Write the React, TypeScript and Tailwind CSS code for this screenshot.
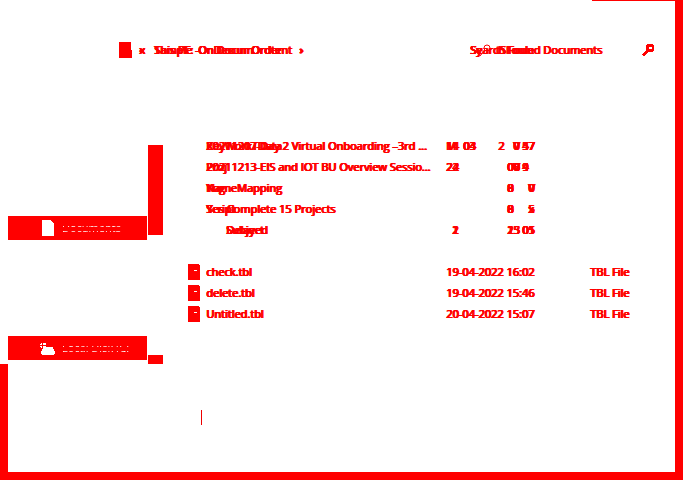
import React from "react";

type Piece = { place: string; texts: string[] };
type FileRow = { names: string[]; indent?: boolean; icon?: boolean; date?: string; pieces?: Piece[]; type?: string };

const rows: FileRow[] = [
  {
    names: ["20211207-Day 2 Virtual Onboarding –3rd ...", "KeyWorkTData"],
    pieces: [
      { place: "col-start-1", texts: ["14", "M"] },
      { place: "col-start-3", texts: ["04", "03"] },
      { place: "col-start-4", texts: ["2"] },
      { place: "col-start-6", texts: ["0", "V"] },
      { place: "col-start-7", texts: ["57", "47"] },
    ],
  },
  {
    names: ["20211213-EIS and IOT BU Overview Sessio...", "Proj"],
    pieces: [
      { place: "col-start-1", texts: ["24", "22"] },
      { place: "col-start-5", texts: ["00", "06"] },
      { place: "col-start-6", texts: ["V"] },
      { place: "col-start-7", texts: ["4", "9"] },
    ],
  },
  {
    names: ["NameMapping", "Yog"],
    pieces: [
      { place: "col-start-5", texts: ["0", "8"] },
      { place: "col-start-8", texts: ["0", "V"] },
    ],
  },
  {
    names: ["Yes Complete 15 Projects", "Script"],
    pieces: [
      { place: "col-start-5", texts: ["0", "8"] },
      { place: "col-start-8", texts: ["5", "x"] },
    ],
  },
  {
    names: ["Subject", "Delayed"],
    indent: true,
    pieces: [
      { place: "col-start-2", texts: ["2", "1"] },
      { place: "col-start-5", texts: ["25", "13"] },
      { place: "col-start-7", texts: ["05", "01"] },
    ],
  },
  { names: [] },
  { names: ["check.tbl"], icon: true, date: "19-04-2022 16:02", type: "TBL File" },
  { names: ["delete.tbl"], icon: true, date: "19-04-2022 15:46", type: "TBL File" },
  { names: ["Untitled.tbl"], icon: true, date: "20-04-2022 15:07", type: "TBL File" },
];

function Stack({ texts, className = "" }: { texts: string[]; className?: string }) {
  return (
    <span className={`grid whitespace-nowrap ${className}`}>
      {texts.map((text) => (
        <span key={text} className="col-start-1 row-start-1">{text}</span>
      ))}
    </span>
  );
}

function FileIcon() {
  return (
    <svg width="12" height="16" viewBox="0 0 12 16" shapeRendering="crispEdges" aria-hidden="true">
      <path d="M0 0H11V1H12V16H0Z" fill="#f00" />
      <path d="M6 6H9V7H6Z" fill="#fff" />
    </svg>
  );
}

function DocumentIcon() {
  return (
    <svg className="shrink-0" width="16" height="16" viewBox="0 0 16 16" shapeRendering="crispEdges" aria-hidden="true">
      <path d="M2 0H11V1H12V2H13V3H14V16H2Z" fill="#fff" />
    </svg>
  );
}

function DriveIcon() {
  return (
    <svg className="shrink-0" width="16" height="16" viewBox="0 0 16 16" shapeRendering="crispEdges" aria-hidden="true">
      <path
        d="M1 3H2V5H0V4H1ZM3 3H6V5H3ZM0 6H2V8H1V7H0ZM3 6H6V7H13V9H14V11H15V14H14V15H2V14H1V11H2V9H3Z"
        fill="#fff"
      />
    </svg>
  );
}

function NavItem({ icon, label }: { icon: React.ReactNode; label: string }) {
  return (
    <button type="button" className="flex h-6 w-full items-center gap-1.5 bg-[#ff0000] pl-8 text-left">
      {icon}
      <span className="bg-[linear-gradient(#f00_3px,#fff_3px,#fff_4px,#f00_4px,#f00_6px,#fff_6px,#fff_7px,#f00_7px,#f00_11px,#fff_11px,#fff_12px,#f00_12px)] bg-clip-text text-[11px] leading-4 font-normal text-transparent">
        {label}
      </span>
    </button>
  );
}

export default function App() {
  return (
    <div className="flex min-h-screen flex-col bg-white font-['Open_Sans','Noto_Sans',sans-serif] text-[11px] leading-4 text-[#ff0000]">
      <div className="flex flex-1">
        <div className="flex min-w-0 flex-1 flex-col">
          <header className="flex h-[135px] flex-col items-end">
            <div className="h-px w-[83px] bg-[#ff0000]" />
            <div className="mt-10 flex h-[18px] w-full items-center pr-5 pl-[119px] [text-shadow:1px_0_0_#f00,1px_0_0_#f00,0_0_0_#f00,0_0_0_#f00]">
              <svg className="shrink-0" width="13" height="16" viewBox="0 0 13 16" shapeRendering="crispEdges" aria-hidden="true">
                <path d="M0 0H12V8H13V16H0Z" fill="#f00" />
              </svg>
              <nav aria-label="Address" className="flex flex-1 items-center pl-[7px]">
                <Stack texts={["«", "x"]} className="w-[15px]" />
                <Stack texts={["Sample -", "This PF:"]} className="w-11" />
                <Stack texts={["On Docum", "OnDecun"]} className="w-[53px]" />
                <Stack texts={["Ordtent", "Order"]} className="w-12" />
                <span className="font-bold">›</span>
              </nav>
              <label className="grid w-[172px] items-center">
                <span className="sr-only">Search documents</span>
                <input
                  type="text"
                  defaultValue="Search Found Documents"
                  className="col-start-1 row-start-1 h-4 w-full bg-transparent p-0 leading-4 outline-none [text-shadow:1px_0_0_#f00,1px_0_0_#f00,0_0_0_#f00,0_0_0_#f00]"
                />
                <Stack texts={["Sy", "         tSFoule"]} className="pointer-events-none col-start-1 row-start-1 whitespace-pre" />
                <svg className="col-start-1 row-start-1 ml-2.5" width="12" height="12" viewBox="0 0 12 12" aria-hidden="true">
                  <circle cx="7" cy="4" r="3" fill="none" stroke="#f00" strokeWidth="1" />
                  <path d="M5 6L0 12" stroke="#f00" />
                </svg>
              </label>
              <button type="button" aria-label="Search">
                <svg width="13" height="12" viewBox="0 0 13 12" shapeRendering="crispEdges" aria-hidden="true">
                  <path d="M5 0H11V1H12V7H11V8H6V9H5V10H4V11H3V12H1V11H0V10H1V9H2V8H3V7H4V1H5ZM7 3V5H10V3Z" fill="#f00" fillRule="evenodd" />
                </svg>
              </button>
            </div>
          </header>

          <div className="flex flex-1">
            <div className="flex w-2 flex-col pt-[229px]">
              <div className="flex-1 bg-[#ff0000]" />
            </div>
            <nav aria-label="Folders" className="flex w-[139px] flex-col gap-24 pt-[81px]">
              <NavItem icon={<DocumentIcon />} label="Documents" />
              <NavItem icon={<DriveIcon />} label="Local Disk (C:" />
            </nav>
            <div className="ml-px flex w-[15px] flex-col gap-[120px] pt-2.5">
              <div className="h-[90px] bg-[#ff0000]" />
              <div className="h-[9px] bg-[#ff0000]" />
            </div>

            <main className="min-w-0 flex-1 pl-[25px]">
              <table className="w-full table-fixed border-collapse text-left [text-shadow:1px_0_0_#f00,1px_0_0_#f00,0_0_0_#f00,0_0_0_#f00]">
                <colgroup>
                  <col className="w-[258px]" />
                  <col className="w-36" />
                  <col />
                </colgroup>
                <tbody>
                  {rows.map((row, index) => (
                    <tr key={index} className="h-[21px]">
                      <td className="p-0">
                        <div className={row.indent ? "flex items-center pl-[38px]" : row.icon ? "flex items-center gap-1.5" : "flex items-center pl-[18px]"}>
                          {row.icon && <FileIcon />}
                          <Stack texts={row.names} />
                        </div>
                      </td>
                      <td className="p-0">
                        {row.date}
                        {row.pieces && (
                          <div className="grid grid-cols-[6px_11px_35px_9px_6px_9px_6px_6px]">
                            {row.pieces.map((piece) => (
                              <Stack key={piece.place} texts={piece.texts} className={`row-start-1 ${piece.place}`} />
                            ))}
                          </div>
                        )}
                      </td>
                      <td className="p-0">{row.type}</td>
                    </tr>
                  ))}
                </tbody>
              </table>
              <div className="mt-[86px] ml-[13px] h-[15px] w-px bg-[#ee0000]" />
            </main>
          </div>
        </div>
        <div className="w-2 bg-[#ff0000]" />
      </div>
      <div className="h-2 bg-[#ff0000]" />
    </div>
  );
}
